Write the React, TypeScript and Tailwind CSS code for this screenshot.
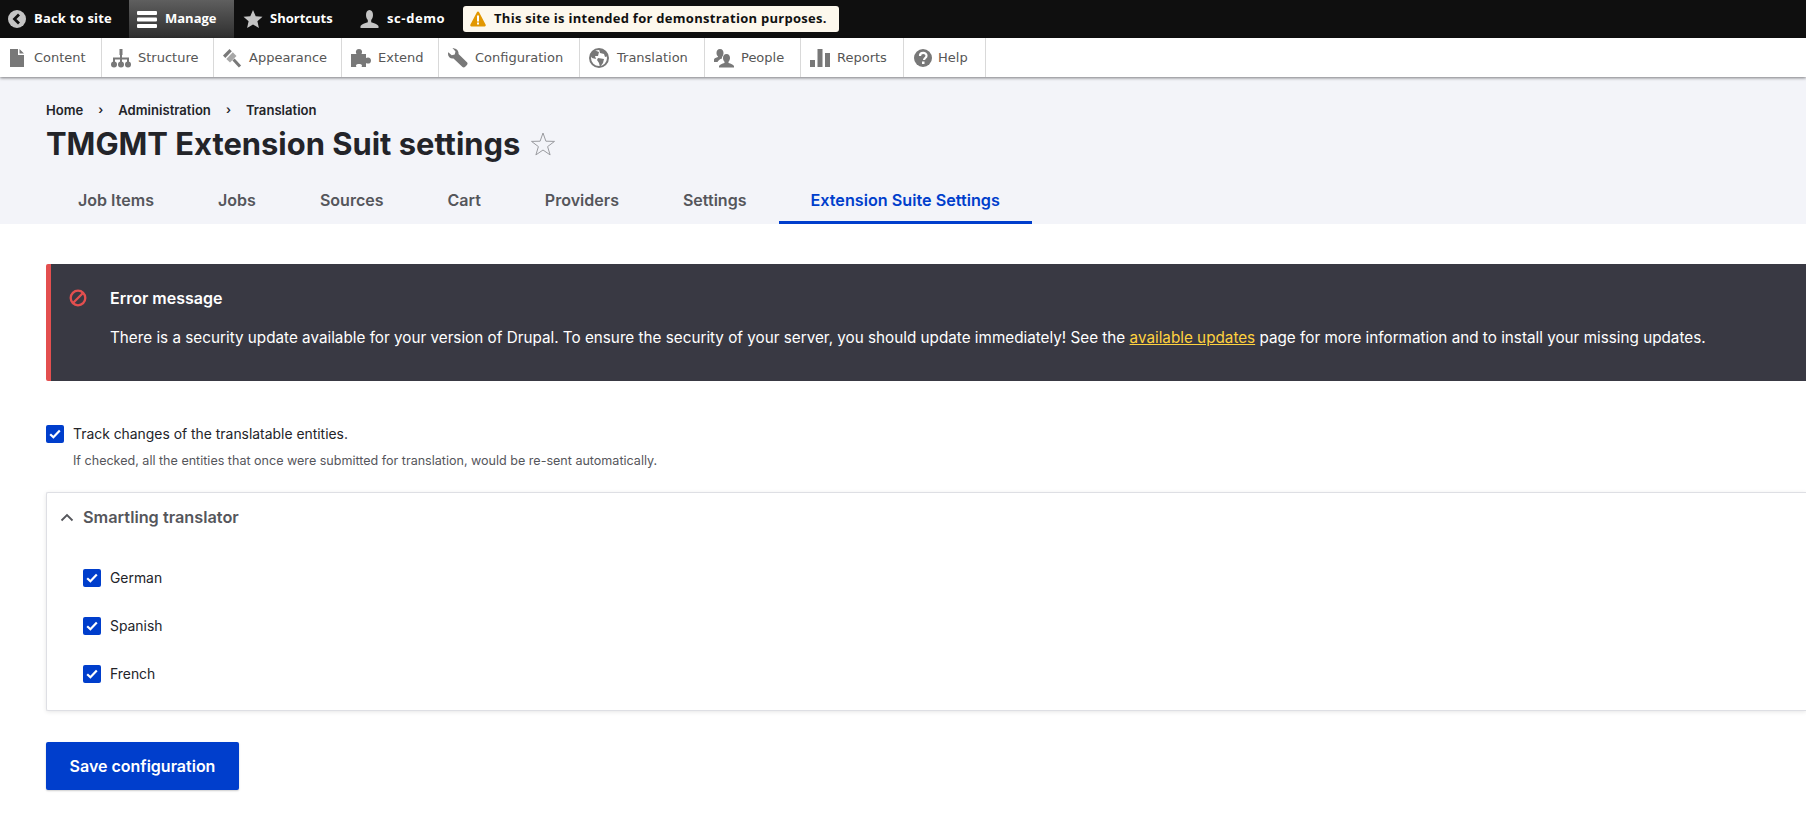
const F = "[font-family:'DejaVu_Sans',sans-serif]";
const B = "[font-family:'Open_Sans',sans-serif]";

function Back() {
  return (
    <svg width="18" height="18" viewBox="0 0 18 18" className="shrink-0">
      <circle cx="9" cy="9" r="9" fill="#c4c4c4" />
      <path d="M11 4.500 6.500 9l4.500 4.500" fill="none" stroke="#0f0f0f" strokeWidth="2.800" />
    </svg>
  );
}
function Burger() {
  return (
    <svg width="20" height="20" viewBox="0 0 20 20" className="shrink-0">
      <rect y="2" width="20" height="4" rx="1" fill="#fff" />
      <rect y="8.500" width="20" height="4" rx="1" fill="#fff" />
      <rect y="15" width="20" height="4" rx="1" fill="#fff" />
    </svg>
  );
}
function Star() {
  return (
    <svg width="20" height="20" viewBox="0 0 20 20" className="shrink-0">
      <path d="M10 1l2.700 6.200 6.800.6-5.100 4.500 1.500 6.700L10 15.500 4.100 19l1.500-6.700L.5 7.800l6.800-.6z" fill="#c4c4c4" />
    </svg>
  );
}
function Person() {
  return (
    <svg width="19" height="20" viewBox="0 0 19 20" className="shrink-0">
      <path d="M9.500 1c2.400 0 3.500 2.200 3.500 5 0 2.300-.8 4-1.800 5v2.200c3 1 6 1.800 7.300 3.800v2H.5v-2c1.300-2 4.300-2.800 7.300-3.800V11C6.800 10 6 8.300 6 6c0-2.800 1.100-5 3.500-5z" fill="#c4c4c4" />
    </svg>
  );
}
function Warn() {
  return (
    <svg width="16" height="16" viewBox="0 0 16 16" className="shrink-0">
      <path d="M8 .5c.5 0 .9.3 1.100.7l6.600 12.600c.3.700-.1 1.700-1.100 1.700H1.400c-1 0-1.400-1-1.100-1.700L6.900 1.200C7.100.8 7.500.5 8 .5z" fill="#e29700" />
      <rect x="7" y="4.500" width="2" height="6" fill="#fff" />
      <rect x="7" y="11.500" width="2" height="2" fill="#fff" />
    </svg>
  );
}
const G = "#787878";
function IContent() {
  return (
    <svg width="20" height="20" viewBox="0 0 20 20">
      <path d="M0 1h8v6h6v12H0z M9.500 1 14 5.500H9.500z" fill={G} />
    </svg>
  );
}
function IStructure() {
  return (
    <svg width="20" height="20" viewBox="0 0 20 20">
      <path d="M8.500 1h3v6h-.5v2.500h7V15h-2v-3.500h-5V15H9v-3.500H4V15H2V9.500h7V7h-.5z" fill={G} />
      <circle cx="3" cy="16.500" r="3" fill={G} />
      <circle cx="10" cy="16.500" r="3" fill={G} />
      <circle cx="17" cy="16.500" r="3" fill={G} />
    </svg>
  );
}
function IAppearance() {
  return (
    <svg width="20" height="20" viewBox="0 0 20 20">
      <path d="M7.500 1 1 7.500 3.300 10 9.800 3.300z" fill={G} />
      <path d="M4.300 11 10.800 4.300l3.700 3.700L8 14.500z" fill={G} opacity=".65" />
      <path d="M11.500 11.500 18 18.500" stroke={G} strokeWidth="3" />
    </svg>
  );
}
function IExtend() {
  return (
    <svg width="20" height="20" viewBox="0 0 20 20">
      <path d="M0 6h5.500C4.500 4.500 4.500 1 8 1s3.500 3.500 2.500 5H15v4c1.500-1 5-1 5 2.500S16.500 16 15 15v4h-4.500c1-1.500.5-3-2.500-3s-3.500 1.500-2.500 3H0z" fill={G} />
    </svg>
  );
}
function IConfig() {
  return (
    <svg width="20" height="20" viewBox="0 0 20 20">
      <path d="M5.500.5c3 0 5.500 2.500 5 5.500l8.700 8.500c.8 1 0 2.200-.5 2.700l-1.500 1.500c-.7.7-1.900 1-2.700.2L5.500 10.500C2.500 11 0 9 0 6c0-.7.1-1.200.3-1.700l3.400 3 3-.8.8-3-3-3.400c.5-.2 1-.6 1.500-.6z" fill={G} />
    </svg>
  );
}
function ITrans() {
  return (
    <svg width="20" height="20" viewBox="0 0 20 20">
      <circle cx="10" cy="10" r="9" fill="#fff" stroke={G} strokeWidth="2" />
      <path d="M5 2l5 2-1 4-3 0 1 3-4-1-2-3z M10 1l6 2 3 5-3 1-1-3-4-1z M9 10l6 1-1 4-3 4-1-4-2-3z" fill={G} />
    </svg>
  );
}
function IPeople() {
  return (
    <svg width="20" height="20" viewBox="0 0 20 20">
      <path d="M6 1c2.500 0 3.500 2 3.500 4 0 1.500-.6 3-1.500 4v1.500c-2 .5-4 2-4.500 3.500H0v-2.500C.5 10 2 9.500 4 9V8.500C3 7.500 2.500 6.500 2.500 5 2.500 3 3.500 1 6 1z" fill={G} />
      <path d="M12.500 6c2.500 0 3.500 2 3.500 4 0 1.500-.6 2.800-1.500 3.800V15c2.500.6 4.500 1.500 5.500 3v1.500H5V18c1-1.500 3-2.400 5.500-3v-1.200C9.600 12.800 9 11.500 9 10c0-2 1-4 3.500-4z" fill={G} />
    </svg>
  );
}
function IReports() {
  return (
    <svg width="20" height="20" viewBox="0 0 20 20">
      <rect x="0" y="12" width="5" height="7" fill={G} />
      <rect x="7.500" y="1" width="5" height="18" fill={G} />
      <rect x="15" y="5" width="5" height="14" fill={G} />
    </svg>
  );
}
function IHelp() {
  return (
    <svg width="18" height="18" viewBox="0 0 18 18">
      <circle cx="9" cy="9" r="9" fill={G} />
      <path d="M6 7c0-4 6.500-4 6.500-.3 0 2.300-2.500 2.300-2.500 4.300" fill="none" stroke="#fff" strokeWidth="2.200" />
      <rect x="8" y="12.500" width="2.500" height="2.500" fill="#fff" />
    </svg>
  );
}

const navItems = [
  { label: "Content", icon: <IContent />, w: "w-[102px]", cls: "pl-[10px] gap-[4px]" },
  { label: "Structure", icon: <IStructure />, w: "w-[112px]", cls: "pl-[9px] gap-[7px]" },
  { label: "Appearance", icon: <IAppearance />, w: "w-[128px]", cls: "pl-[8px] gap-[7px]" },
  { label: "Extend", icon: <IExtend />, w: "w-[97px]", cls: "pl-[9px] gap-[7px]" },
  { label: "Configuration", icon: <IConfig />, w: "w-[141px]", cls: "pl-[9px] gap-[7px]" },
  { label: "Translation", icon: <ITrans />, w: "w-[125px]", cls: "pl-[9px] gap-[8px]" },
  { label: "People", icon: <IPeople />, w: "w-[96px]", cls: "pl-[9px] gap-[7px]" },
  { label: "Reports", icon: <IReports />, w: "w-[103px]", cls: "pl-[9px] gap-[7px]" },
  { label: "Help", icon: <IHelp />, w: "w-[82px]", cls: "pl-[9px] gap-[5px]" },
];

const tabs = ["Job Items", "Jobs", "Sources", "Cart", "Providers", "Settings"];

function Check() {
  return (
    <span className="flex h-[18px] w-[18px] shrink-0 items-center justify-center rounded-[2px] bg-[#003ecc]">
      <svg width="12" height="10" viewBox="0 0 12 10">
        <path d="M1.200 5.200 4.400 8.300 10.800 1.500" fill="none" stroke="#fff" strokeWidth="2.200" />
      </svg>
    </span>
  );
}

export default function App() {
  return (
    <div className="min-h-screen overflow-hidden bg-white font-['Inter',sans-serif] text-[#232429]">
      <div className={`flex h-[38px] items-center bg-[#0f0f0f] text-[13px] font-bold text-white ${B}`}>
        <a className="flex h-full w-[129px] items-center gap-2 pl-2">
          <Back />
          <span className="tracking-[0.2px]">Back to site</span>
        </a>
        <a className="flex h-full w-[105px] items-center gap-2 bg-gradient-to-b from-[#5f5f5f] to-[#2f2f2f] pl-2">
          <Burger />
          <span>Manage</span>
        </a>
        <a className="flex h-full w-[126px] items-center gap-[7px] pl-[9px]">
          <Star />
          <span>Shortcuts</span>
        </a>
        <a className="flex h-full w-[103px] items-center gap-2">
          <Person />
          <span className="tracking-[0.6px]">sc-demo</span>
        </a>
        <div className="flex h-[26px] w-[376px] items-center gap-2 rounded-[3px] bg-[#fdf8ed] pl-[7px] text-[#111]">
          <Warn />
          <span className="whitespace-nowrap tracking-[0.28px]">This site is intended for demonstration purposes.</span>
        </div>
      </div>

      <nav className={`relative z-10 flex h-[39px] items-center bg-white text-[13px] text-[#565656] shadow-[0_1px_3px_rgba(0,0,0,0.5)] ${F}`}>
        {navItems.map((n) => (
          <a key={n.label} className={`flex h-full items-center border-r border-[#d9d9d9] ${n.w} ${n.cls}`}>
            <span className="flex h-5 w-5 shrink-0 items-center justify-center">{n.icon}</span>
            <span>{n.label}</span>
          </a>
        ))}
      </nav>

      <header className="bg-[#f3f4f9] px-[46px] pt-[25px]">
        <div className="flex h-4 items-center text-[13.100px] font-semibold leading-4">
          <span>Home</span>
          <span className="mx-[15px] text-[12px] font-semibold">›</span>
          <span>Administration</span>
          <span className="mx-[15px] text-[12px] font-semibold">›</span>
          <span>Translation</span>
        </div>
        <div className="mt-[5px] flex h-[42px] items-center">
          <h1 className="text-[30.900px] font-bold leading-[42px]">TMGMT Extension Suit settings</h1>
          <svg width="26" height="26" viewBox="0 0 26 26" className="ml-[10px]">
            <path d="M13 2l2.900 8.200 8.600.2-6.900 5.200 2.500 8.300L13 19l-7.100 4.900 2.500-8.300-6.900-5.200 8.600-.2z" fill="none" stroke="#9a9ba0" strokeWidth="1" />
          </svg>
        </div>
        <div className="mt-[11px] flex">
          {tabs.map((t) => (
            <a key={t} className="flex h-12 items-center px-8 text-[16.050px] font-semibold text-[#55565b]">
              {t}
            </a>
          ))}
          <a className="flex h-12 items-center border-b-[3px] border-[#003ecc] px-8 pt-[3px] text-[16.200px] font-semibold text-[#003ecc]">
            Extension Suite Settings
          </a>
        </div>
      </header>

      <main className="pl-[46px] pt-10">
        <section className="flex h-[117px] rounded-l-[2px] border-l-[5px] border-[#e34f4f] bg-[#393943] text-white">
          <svg width="18" height="18" viewBox="0 0 18 18" className="ml-[18px] mt-[25px] shrink-0">
            <circle cx="9" cy="9" r="7.300" fill="none" stroke="#e34f4f" strokeWidth="2.300" />
            <path d="M4 14 14 4" stroke="#e34f4f" strokeWidth="2.300" />
          </svg>
          <div className="ml-[23px] pt-[23px]">
            <h2 className="text-[16px] font-semibold leading-[22px]">Error message</h2>
            <p className="mt-[18px] whitespace-nowrap text-[15.250px] leading-[22px]">
              There is a security update available for your version of Drupal. To ensure the security of your server, you should update immediately! See the{" "}
              <a className="text-[#ffd23f] underline">available updates</a> page for more information and to install your missing updates.
            </p>
          </div>
        </section>

        <div className="mt-[44px] flex h-[18px] items-center gap-[9px]">
          <Check />
          <span className="text-[13.900px]">Track changes of the translatable entities.</span>
        </div>
        <p className="ml-[27px] mt-[9px] text-[12.550px] leading-[18px] text-[#55565b]">
          If checked, all the entities that once were submitted for translation, would be re-sent automatically.
        </p>

        <div className="mt-[22px] h-[219px] rounded-l-[2px] border border-r-0 border-[#dedfe4] bg-white shadow-[0_1px_4px_rgba(0,0,0,0.1)]">
          <div className="flex h-[48px] items-center pl-[13px]">
            <svg width="14" height="9" viewBox="0 0 14 9" className="mr-[9px]">
              <path d="M1.500 7.500 7 2l5.500 5.500" fill="none" stroke="#55565b" strokeWidth="1.800" />
            </svg>
            <span className="text-[16.300px] font-semibold text-[#55565b]">Smartling translator</span>
          </div>
          <div className="flex flex-col gap-[30px] pl-9 pt-7">
            {["German", "Spanish", "French"].map((l) => (
              <div key={l} className="flex h-[18px] items-center gap-[9px]">
                <Check />
                <span className="text-[13.900px]">{l}</span>
              </div>
            ))}
          </div>
        </div>

        <button className="mt-[31px] flex h-12 w-[193px] items-center justify-center rounded-[2px] bg-[#003ecc] text-[16px] font-semibold text-white shadow-[0_1px_2px_rgba(0,0,0,0.2)]">
          Save configuration
        </button>
      </main>
    </div>
  );
}
